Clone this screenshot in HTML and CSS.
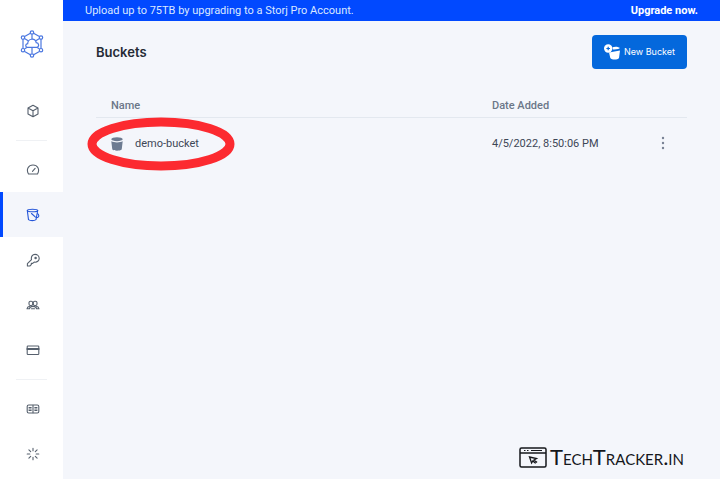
FILE: index.html
```html
<!DOCTYPE html>
<html lang="en">
<head>
<meta charset="utf-8">
<title>Buckets</title>
<link rel="stylesheet" href="styles.css">
</head>
<body>
<div class="app">
  <aside class="sidebar">
    <a class="logo" href="#" aria-label="Home">
      <svg viewBox="0 0 24 28" width="24" height="28" fill="none" stroke="#4b77e0" stroke-width="1.2">
        <path d="M10.4 3.3 4.6 6.6M13.6 3.3l5.8 3.3M3 9.4v9M21 9.4v9M4.6 21.4l5.8 3.3M19.4 21.4l-5.8 3.3M12 4.2V9M4.5 8.5l3.7 2.3M19.5 8.5l-3.7 2.3M4.6 18.7l2.3-1.3M19.4 18.7l-2.3-1.3M12 17.4v6.2"/>
        <path d="M7.200 17.400c-2.100-.5-2-3.500.5-3.800.2-5.500 7.600-5.800 8.500-1 3 .2 3.200 4.200.6 4.800z"/>
        <circle cx="12" cy="2.500" r="1.700"/><circle cx="3" cy="7.600" r="1.700"/><circle cx="21" cy="7.600" r="1.700"/><circle cx="3" cy="20.200" r="1.700"/><circle cx="21" cy="20.200" r="1.700"/><circle cx="12" cy="25.500" r="1.700"/>
      </svg>
    </a>
    <nav class="nav" aria-label="Main">
      <a class="item" href="#" aria-label="Project"><svg class="icon" viewBox="0 0 14 14"><path d="M7 1.200 12 4v6l-5 2.800L2 10V4zM2 4l5 2.800L12 4M7 6.800v6"/></svg></a>
      <hr class="line">
      <a class="item" href="#" aria-label="Dashboard"><svg class="icon" viewBox="0 0 14 14"><path d="M2.500 11C-.2 6.300 2.500 2 7 2s7.200 4.300 4.500 9zM6.500 8.300l2.600-3"/></svg></a>
      <a class="item active" href="#" aria-label="Buckets" aria-current="page"><svg class="icon" viewBox="0 0 14 14"><ellipse cx="6.500" cy="2.500" rx="5.200" ry="1.300"/><path d="M1.300 2.500 2.500 11.600c1.500 1.300 6 1.300 7.500 0l1.700-9.100M5.500 5.500l4 3.600c1.800 1.200 3.300 0 3.300-1.400 0-1.200-.8-2-1.600-2.600"/></svg></a>
      <a class="item" href="#" aria-label="Access"><svg class="icon" viewBox="0 0 14 14"><path d="M5.500 6.600C4.800 3.500 6.500 1.400 9 1.400s4.200 2 4.200 4-2 4.400-5 3.700L6.700 10.400H5.300v1.300L3.800 13H1.400v-2.300z"/><circle cx="9.600" cy="5" r=".7"/></svg></a>
      <a class="item" href="#" aria-label="Users"><svg class="icon" viewBox="0 0 14 14"><rect x="3" y="3.300" width="3.700" height="4.200" rx="1.500"/><rect x="7.300" y="3.300" width="3.700" height="4.200" rx="1.500"/><path d="M1 10.700c.2-1.600 1-2.100 2.600-2.400M13 10.700c-.2-1.600-1-2.100-2.600-2.400M3.500 10.700c.3-2 1.500-2.300 3.500-2.300s3.200.3 3.500 2.300M1 10.700h2.500M5.500 10.700h3M10.500 10.700H13"/></svg></a>
      <a class="item" href="#" aria-label="Billing"><svg class="icon" viewBox="0 0 14 14"><rect x="1.200" y="3" width="11.600" height="8.500" rx=".8"/><path d="M1.300 6h11.400" stroke-width="1.800"/></svg></a>
      <hr class="line">
      <a class="item" href="#" aria-label="Resources"><svg class="icon" viewBox="0 0 14 14"><rect x="1.200" y="3" width="11.600" height="8" rx="1.500"/><path d="M7 3.200v7.600M3 5.500h2.200M3 7h2.200M3 8.500h2.200M8.800 5.500H11M8.800 7H11M8.800 8.500H11"/></svg></a>
      <a class="item" href="#" aria-label="Quick start"><svg class="icon" viewBox="0 0 14 14"><path d="M7 1.200v2.600M7 10.200v2.600M1.200 7h2.600M10.200 7h2.600M2.900 2.900l1.800 1.800M9.300 9.300l1.800 1.800M2.900 11.100l1.800-1.800M9.300 4.700l1.800-1.800"/></svg></a>
    </nav>
  </aside>
  <div class="page">
    <div class="banner"><span>Upload up to 75TB by upgrading to a Storj Pro Account.</span><a href="#">Upgrade now.</a></div>
    <main class="content">
      <header class="head">
        <h1>Buckets</h1>
        <button class="new" type="button">
          <svg viewBox="0 0 16 16" width="16" height="16"><path fill="#fff" d="M5 8.500 16 6.500 15 14c-1.500 2-7.200 2-8.700 0zM8.500 3.200c2.500-1 6.500-.5 7.300.9 0 1-3.800 1.500-6.800 1.300z"/><circle cx="4.200" cy="4.500" r="4.200" fill="#fff"/><path stroke="#0468dc" stroke-width="1.200" d="M4.200 2.700v3.600M2.400 4.500H6"/></svg>
          <span>New Bucket</span>
        </button>
      </header>
      <table class="table">
        <thead><tr><th class="name">Name</th><th>Date Added</th><th class="more"></th></tr></thead>
        <tbody><tr>
          <td class="name"><div class="bucket">
            <svg viewBox="0 0 12 14" width="12" height="14" fill="#6d7b91"><ellipse cx="6" cy="2.200" rx="5.700" ry="2"/><path d="M.3 4.300c3 1.500 8.400 1.500 11.400 0l-1 8.200c-1.800 1.600-7.600 1.600-9.400 0z"/></svg>
            <span>demo-bucket</span>
            <svg class="ring" viewBox="0 0 148 54" width="148" height="54" fill="none" stroke="#fc2a30" stroke-width="9"><ellipse cx="74" cy="27" rx="69" ry="22"/></svg>
          </div></td>
          <td>4/5/2022, 8:50:06 PM</td>
          <td class="more"><button class="dots" type="button" aria-label="Bucket actions"><svg viewBox="0 0 4 14" width="4" height="14" fill="#788294"><circle cx="2" cy="2" r="1.200"/><circle cx="2" cy="7" r="1.200"/><circle cx="2" cy="12" r="1.200"/></svg></button></td>
        </tr></tbody>
      </table>
      <footer class="brand">
        <svg viewBox="0 0 28 21" width="28" height="21" fill="none" stroke="#15171b" stroke-width="1.500"><rect x="1" y="1" width="26" height="19" rx="1.500"/><path d="M1 6h26"/><path d="M5 3.500h1.500M8 3.500h1.500M12 3.500h11" stroke-width="1"/><path d="m10.500 10 7 1.600-2.500 1.400 2.500 2-1.300 1-2.400-2-1.200 2z" stroke-width="1.300"/></svg>
        <span>TechTracker.in</span>
      </footer>
    </main>
  </div>
</div>
</body>
</html>
```
FILE: styles.css
```css
* { box-sizing: border-box; }

body {
  margin: 0;
  background: #f4f6fb;
  color: #3d4656;
  font: 11px/16px Roboto, "Liberation Sans", sans-serif;
}

a { color: inherit; text-decoration: none; }

button { font: inherit; border: 0; cursor: pointer; }

svg { display: block; flex: none; }

.app { display: flex; min-height: 100vh; }

.sidebar {
  flex: 0 0 63px;
  padding-top: 30px;
  background: #fff;
}

.logo {
  display: flex;
  justify-content: center;
  margin-bottom: 30px;
}

.item {
  display: flex;
  align-items: center;
  justify-content: center;
  height: 45px;
  border-left: 3px solid transparent;
  color: #56606d;
}

.item.active {
  background: #f4f6fb;
  border-color: #0149ff;
  color: #2455d8;
}

.icon {
  width: 14px;
  height: 14px;
  fill: none;
  stroke: currentColor;
  stroke-width: 1.1;
  stroke-linejoin: round;
  stroke-linecap: round;
}

.line {
  height: 1px;
  margin: 7px 16px 6px;
  border: 0;
  background: #eff1f4;
}

.page {
  flex: 1;
  display: flex;
  flex-direction: column;
}

.banner {
  display: flex;
  justify-content: space-between;
  padding: 3px 22px 2px;
  background: #0149ff;
  color: #dbe8ff;
}

.banner a { color: #fff; font-weight: 700; }

.content {
  flex: 1;
  display: flex;
  flex-direction: column;
  padding: 14px 33px 8px;
}

.head {
  display: flex;
  align-items: center;
  justify-content: space-between;
}

h1 {
  margin: 0;
  color: #252b35;
  font-family: Inter, sans-serif;
  font-size: 13px;
  font-weight: 600;
}

.new {
  display: flex;
  align-items: center;
  gap: 4px;
  height: 34px;
  padding: 0 12px;
  border-radius: 4px;
  background: #0468dc;
  color: #fff;
  font-family: Inter, sans-serif;
  font-size: 9px;
}

.table {
  width: 100%;
  margin-top: 24px;
  border-collapse: collapse;
  table-layout: fixed;
}

th, td { padding: 2px 0 0; text-align: left; }

th {
  height: 24px;
  border-bottom: 1px solid #e3e8ef;
  color: #6b7688;
  font-weight: 500;
}

td { height: 52px; }

.name { width: 67%; padding-left: 15px; }

.more { width: 32px; padding-top: 0; }

.bucket {
  position: relative;
  display: flex;
  align-items: center;
  gap: 12px;
}

.ring {
  position: absolute;
  left: -24px;
  top: 50%;
  transform: translateY(-50%);
  pointer-events: none;
}

.dots { padding: 4px 6px; background: none; }

.brand {
  display: flex;
  align-items: center;
  justify-content: flex-end;
  gap: 3px;
  margin-top: auto;
  padding-right: 3px;
  color: #15171b;
  font: 22px/28px Lato, sans-serif;
  font-variant: small-caps;
}
```
